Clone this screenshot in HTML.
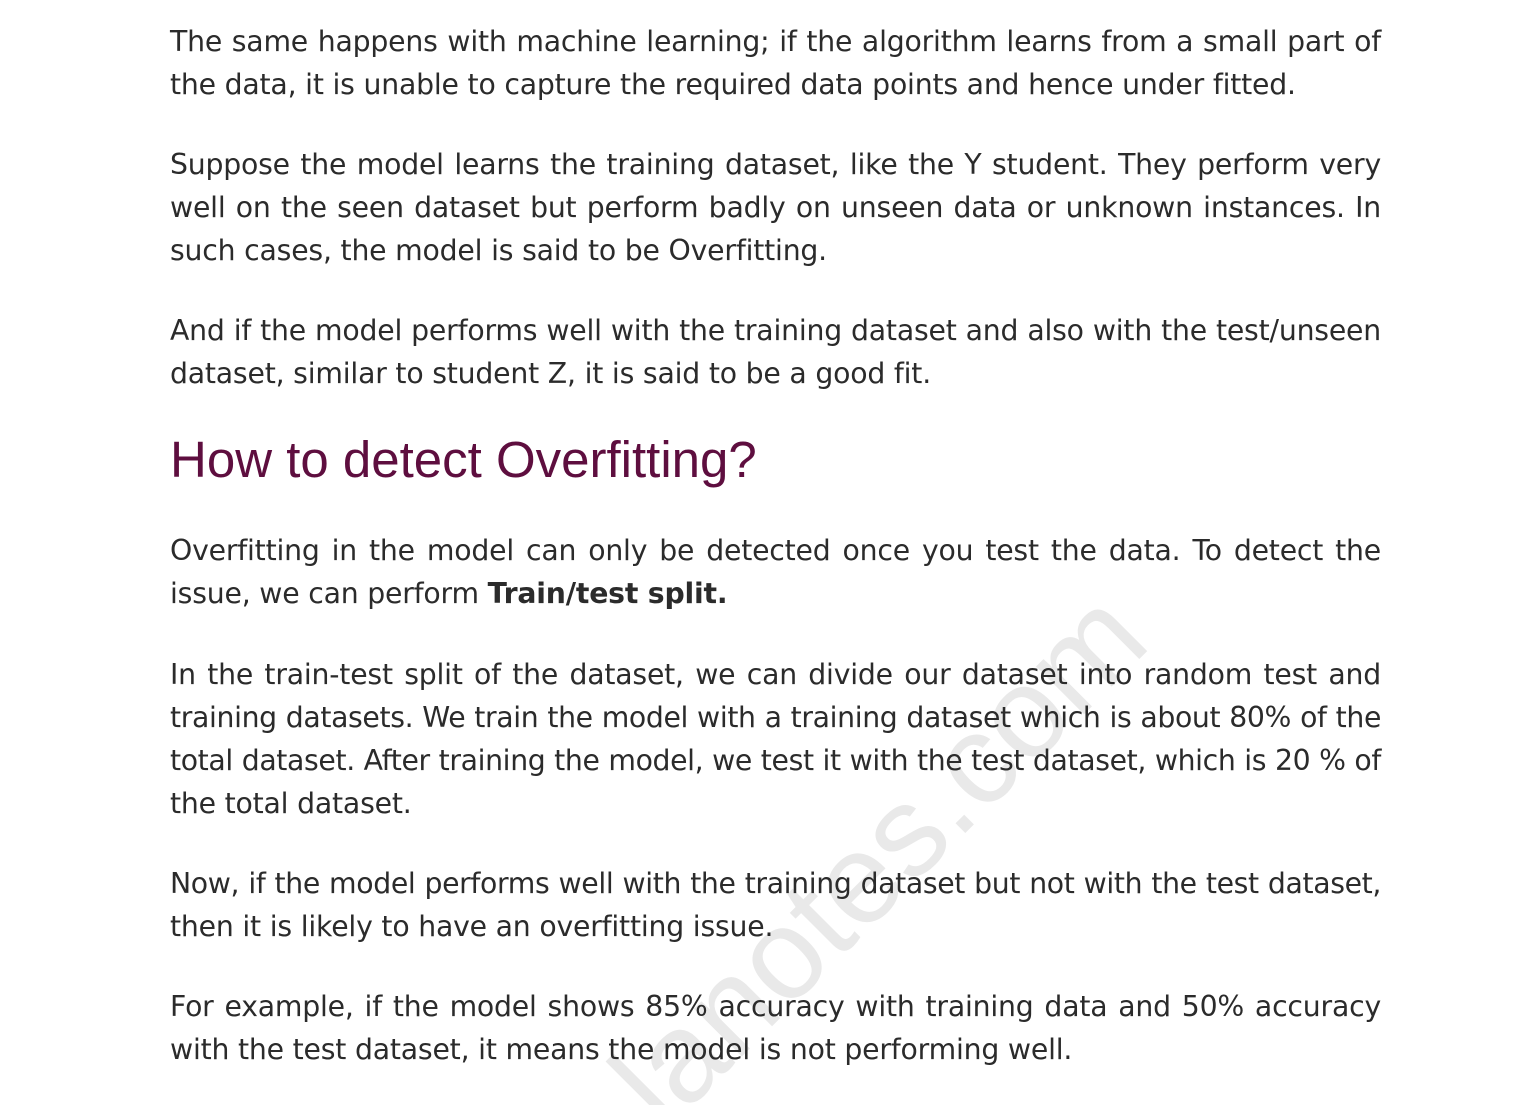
<!DOCTYPE html>
<html><head><meta charset="utf-8"><style>
html,body{margin:0;padding:0;background:#fff;width:1524px;height:1105px;overflow:hidden;position:relative}
.l{position:absolute;left:170px;width:1211px;height:43px;line-height:43px;font-family:"DejaVu Sans","Liberation Sans",sans-serif;font-size:28.3px;color:#2b2b2b;white-space:nowrap;text-align:justify;text-align-last:justify;letter-spacing:-0.2px}
.e{text-align-last:left}
.t{letter-spacing:-0.36px}
h1{position:absolute;left:170px;top:430px;margin:0;font-family:"Liberation Sans",sans-serif;font-weight:normal;font-size:51px;line-height:60px;color:#5e0e3f}
.wm{position:absolute;left:680px;top:1020px;font-family:"Liberation Sans",sans-serif;font-size:128px;color:#e9e9e9;transform:rotate(-45deg);transform-origin:0 100%;white-space:nowrap;line-height:1}
</style></head><body>
<div class="wm">lanotes.com</div>
<div class="l" style="top:20px">The same happens with machine learning; if the algorithm learns from a small part of</div>
<div class="l e" style="top:63px">the data, it is unable to capture the required data points and hence under fitted.</div>
<div class="l" style="top:143px">Suppose the model learns the training dataset, like the Y student. They perform very</div>
<div class="l" style="top:186px">well on the seen dataset but perform badly on unseen data or unknown instances. In</div>
<div class="l e" style="top:229px">such cases, the model is said to be Overfitting.</div>
<div class="l" style="top:309px">And if the model performs well with the training dataset and also with the test/unseen</div>
<div class="l e" style="top:352px">dataset, similar to student Z, it is said to be a good fit.</div>
<h1>How to detect Overfitting?</h1>
<div class="l" style="top:529px">Overfitting in the model can only be detected once you test the data. To detect the</div>
<div class="l e" style="top:572px">issue, we can perform <b>Train/test split.</b></div>
<div class="l" style="top:653px">In the train-test split of the dataset, we can divide our dataset into random test and</div>
<div class="l t" style="top:696px">training datasets. We train the model with a training dataset which is about 80% of the</div>
<div class="l t" style="top:739px">total dataset. After training the model, we test it with the test dataset, which is 20 % of</div>
<div class="l e" style="top:782px">the total dataset.</div>
<div class="l t" style="top:862px">Now, if the model performs well with the training dataset but not with the test dataset,</div>
<div class="l e" style="top:905px">then it is likely to have an overfitting issue.</div>
<div class="l" style="top:985px">For example, if the model shows 85% accuracy with training data and 50% accuracy</div>
<div class="l e" style="top:1028px">with the test dataset, it means the model is not performing well.</div>
</body></html>
